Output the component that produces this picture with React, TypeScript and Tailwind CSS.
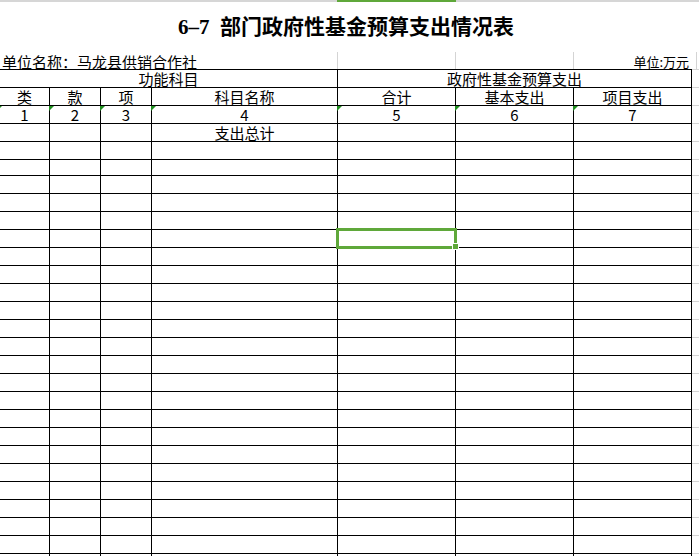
import React from "react";

const colW = ["w-[50px]", "w-[51px]", "w-[51px]", "w-[186px]", "w-[118px]", "w-[118px]", "w-[118px]"];

const heads = ["类", "款", "项", "科目名称", "合计", "基本支出", "项目支出"];

// body row heights (incl. bottom border), one row is shorter in the sheet
const bodyRows = [
  "h-[18px]", "h-[18px]", "h-[16px]",
  ...Array.from({ length: 22 }, () => "h-[18px]"),
];

function Row({ h, cells, marks }: { h: string; cells?: (string | null)[]; marks?: boolean }) {
  return (
    <div className={`flex ${h}`}>
      <div className="flex border-b border-black">
        {colW.map((w, i) => (
          <div
            key={i}
            className={`${w} relative h-full border-r border-black flex items-center justify-center leading-none`}
          >
            {marks && (
              <span
                className={`absolute top-0 ${i === 0 ? "left-[-3px]" : "left-[-1px]"} w-[5px] h-[5px] bg-[#1f8f1f] [clip-path:polygon(0_0,100%_0,0_100%)]`}
              />
            )}
            {cells?.[i]}
          </div>
        ))}
      </div>
      <div className="w-[7px] border-b border-[#d4d4d4]" />
    </div>
  );
}

export default function App() {
  return (
    <div className="w-[699px] h-[556px] overflow-hidden bg-white text-black font-['Noto_Sans_CJK_SC',sans-serif] text-[15px]">
      {/* sheet top edge, selected column marker */}
      <div className="flex h-[2px] bg-[#d6d6d6]">
        <div className="ml-[337px] w-[119px] bg-[#5fa83a]" />
      </div>

      {/* title */}
      <div className="w-[692px] h-[50px] flex justify-center pt-[15px]">
        <h1 className="text-[21px] font-bold leading-none whitespace-pre font-['Liberation_Serif','Noto_Sans_CJK_SC',serif]">
          {"6–7  部门政府性基金预算支出情况表"}
        </h1>
      </div>

      <div className="relative">
        {/* unit row */}
        <div className="flex h-[18px]">
          <div className="flex border-b border-black">
            <div className="w-[338px] h-full border-r border-[#d4d4d4] flex items-end pl-[2px] leading-none whitespace-nowrap">
              单位名称：马龙县供销合作社
            </div>
            <div className="w-[118px] h-full border-r border-[#d4d4d4]" />
            <div className="w-[118px] h-full border-r border-[#d4d4d4]" />
            <div className="w-[118px] h-full flex items-end justify-end pr-[3px] pb-[1px] text-[13px] leading-none">
              单位:万元
            </div>
          </div>
          <div className="w-[7px] border-b border-[#d4d4d4]">
            <div className="w-[5px] h-full border-r border-[#d4d4d4]" />
          </div>
        </div>

        {/* header row 1 */}
        <div className="flex h-[18px]">
          <div className="flex border-b border-black">
            <div className="w-[338px] h-full border-r border-black flex items-center justify-center leading-none">
              功能科目
            </div>
            <div className="w-[354px] h-full border-r border-black flex items-center justify-center leading-none">
              政府性基金预算支出
            </div>
          </div>
          <div className="w-[7px] border-b border-[#d4d4d4]" />
        </div>

        <Row h="h-[18px]" cells={heads} />
        <Row h="h-[18px]" cells={["1", "2", "3", "4", "5", "6", "7"]} marks />

        {bodyRows.map((h, i) => (
          <Row key={i} h={h} cells={i === 0 ? [null, null, null, "支出总计"] : undefined} />
        ))}

        {/* active cell */}
        <div className="absolute left-[336px] top-[176px] w-[121px] h-[21px] border-[3px] border-[#5fa83a]" />
        <div className="absolute left-[452px] top-[191px] w-[7px] h-[7px] bg-[#5fa83a] border border-white" />
      </div>
    </div>
  );
}
